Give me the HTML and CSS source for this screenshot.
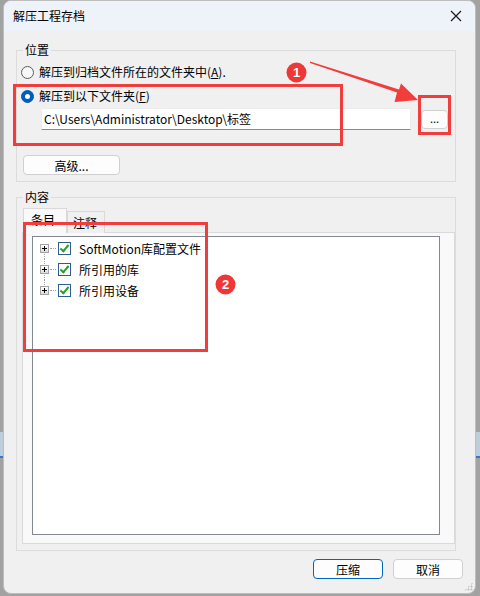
FILE: index.html
```html
<!DOCTYPE html>
<html>
<head>
<meta charset="utf-8">
<link rel="stylesheet" href="styles.css">
</head>
<body>
<div class="desk-strip"></div>
<div class="window">
  <div class="titlebar">
    <span class="title">解压工程存档</span>
    <svg class="close" width="12" height="12" viewBox="0 0 12 12"><path d="M1 1L11 11M11 1L1 11" stroke="#1a1a1a" stroke-width="1.2"/></svg>
  </div>
  <div class="content">
    <div class="group g1">
      <div class="legend">位置</div>
      <div class="radio-row"><span class="radio"></span><span>解压到归档文件所在的文件夹中(<u>A</u>).</span></div>
      <div class="radio-row second"><span class="radio checked"></span><span>解压到以下文件夹(<u>F</u>)</span></div>
      <div class="path-row">
        <div class="input">C:\Users\Administrator\Desktop\标签</div>
        <div class="btn browse">...</div>
      </div>
      <div class="btn adv">高级...</div>
    </div>
    <div class="group g2">
      <div class="legend">内容</div>
      <div class="tabs">
        <div class="tab active">条目</div>
        <div class="tab">注释</div>
      </div>
      <div class="tabpage">
        <div class="tree">
          <div class="tree-row first"><span class="expander"></span><span class="dots"></span><span class="check"></span><span class="label">SoftMotion库配置文件</span></div>
          <div class="tree-row"><span class="expander"></span><span class="dots"></span><span class="check"></span><span class="label">所引用的库</span></div>
          <div class="tree-row last"><span class="expander"></span><span class="dots"></span><span class="check"></span><span class="label">所引用设备</span></div>
        </div>
      </div>
    </div>
    <div class="footer">
      <div class="btn action default">压缩</div>
      <div class="btn action">取消</div>
    </div>
  </div>
  <div class="grip"></div>
</div>
<svg class="annot" width="480" height="596" viewBox="0 0 480 596">
  <rect x="14.5" y="85.5" width="327" height="59" fill="none" stroke="#f23d3d" stroke-width="3"/>
  <rect x="419.5" y="96.5" width="30" height="37" fill="none" stroke="#f23d3d" stroke-width="3"/>
  <rect x="24.5" y="223.5" width="182" height="127" fill="none" stroke="#f23d3d" stroke-width="3"/>
  <polygon points="310,61.5 310,63 397,92.5 394.5,102 418,100 401,83.5 399,89.5" fill="#f23d3d"/>
  <circle cx="296.5" cy="72.5" r="10" fill="#ee3838"/>
  <text x="296.5" y="77" class="num">1</text>
  <circle cx="225.5" cy="284.5" r="10" fill="#ee3838"/>
  <text x="225.5" y="289" class="num">2</text>
</svg>
</body>
</html>
```
FILE: styles.css
```css
html, body {
  margin: 0;
  padding: 0;
}
body {
  width: 480px;
  height: 596px;
  background: #a2a2a2;
  position: relative;
  overflow: hidden;
  font-family: "Noto Sans CJK SC", "Noto Sans", sans-serif;
  font-size: 12px;
  color: #000;
}
.desk-strip {
  position: absolute;
  left: 0;
  top: 432px;
  width: 480px;
  height: 24px;
  background: #bdcddc;
  border-bottom: 2px solid #2f78d0;
}
.window {
  position: relative;
  z-index: 1;
  margin-left: 3px;
  width: 473px;
  height: 594px;
  box-sizing: border-box;
  border: 1px solid #bdbdbd;
  border-radius: 8px;
  background: #f0f0f0;
  overflow: hidden;
  display: flex;
  flex-direction: column;
}
.titlebar {
  height: 30px;
  flex: none;
  background: #eef3f9;
  display: flex;
  align-items: center;
  justify-content: space-between;
  padding: 0 9px 0 9px;
}
.title {
  font-size: 12px;
  line-height: 16px;
}
.close {
  margin-right: 4px;
}
.content {
  display: flex;
  flex-direction: column;
  padding: 0 12px 0 12px;
}
.group {
  width: 440px;
  border: 1px solid #dcdcdc;
  display: flex;
  flex-direction: column;
  align-items: flex-start;
  box-sizing: border-box;
}
.g1 {
  margin-top: 19px;
  height: 132px;
}
.g2 {
  margin-top: 15px;
  height: 354px;
  align-items: stretch;
}
.legend {
  margin-top: -9px;
  margin-left: 6px;
  padding: 0 2px;
  height: 16px;
  line-height: 16px;
  background: #f0f0f0;
  align-self: flex-start;
  font-size: 12px;
}
.radio-row {
  margin-top: 4px;
  height: 20px;
  display: flex;
  align-items: center;
  margin-left: 4px;
  line-height: 16px;
}
.radio-row u {
  text-decoration: underline;
  text-underline-offset: 1px;
}
.radio {
  width: 11px;
  height: 11px;
  border: 1px solid #5c5c5c;
  border-radius: 50%;
  background: #f7f7f7;
  margin-right: 5px;
  flex: none;
  position: relative;
}
.radio.checked {
  background: #005fb8;
  border-color: #005fb8;
}
.radio.checked::after {
  content: "";
  position: absolute;
  left: 3px;
  top: 3px;
  width: 5px;
  height: 5px;
  border-radius: 50%;
  background: #fff;
}
.path-row {
  margin-top: 2px;
  margin-left: 24px;
  display: flex;
  align-items: center;
  height: 22px;
}
.input {
  width: 370px;
  height: 22px;
  box-sizing: border-box;
  background: #fff;
  border: 1px solid #ececec;
  border-bottom: 1px solid #8a8a8a;
  border-radius: 2px 2px 0 0;
  padding-left: 2px;
  line-height: 20px;
  font-size: 12px;
  white-space: nowrap;
}
.btn {
  box-sizing: border-box;
  background: #fdfdfd;
  border: 1px solid #d0d0d0;
  border-radius: 4px;
  display: flex;
  align-items: center;
  justify-content: center;
  font-size: 12px;
}
.browse {
  margin-left: 10px;
  width: 27px;
  height: 19px;
  font-size: 11px;
  line-height: 10px;
  padding-bottom: 3px;
}
.adv {
  margin-top: 25px;
  margin-left: 6px;
  width: 97px;
  height: 20px;
}
.tabs {
  margin-top: 4px;
  margin-left: 6px;
  display: flex;
  align-items: flex-end;
  height: 24px;
  position: relative;
  z-index: 2;
  margin-bottom: -1px;
}
.tab {
  height: 22px;
  box-sizing: border-box;
  border: 1px solid #d9d9d9;
  border-bottom: none;
  background: #f0f0f0;
  padding: 0 5px 0 5px;
  line-height: 21px;
  width: 38px;
}
.tab.active {
  height: 25px;
  width: 44px;
  background: #f9f9f9;
  padding-left: 7px;
  line-height: 22px;
  margin-right: 0;
}
.tabpage {
  margin-left: 5px;
  margin-right: 0;
  height: 312px;
  box-sizing: border-box;
  border: 1px solid #d9d9d9;
  background: #f9f9f9;
  padding: 3px 14px 8px 9px;
  display: flex;
}
.tree {
  flex: 1;
  border: 1px solid #828790;
  background: #fff;
  padding-top: 1px;
}
.tree-row {
  height: 21px;
  display: flex;
  align-items: center;
  position: relative;
}
.tree-row::before {
  content: "";
  position: absolute;
  left: 11px;
  top: 0;
  bottom: 0;
  border-left: 1px dotted #a0a0a0;
}
.tree-row.first::before {
  top: 10px;
}
.tree-row.last::before {
  bottom: 10px;
}
.expander {
  position: relative;
  z-index: 1;
  margin-left: 7px;
  width: 9px;
  height: 9px;
  box-sizing: border-box;
  border: 1px solid #a3a3a3;
  background: linear-gradient(#ffffff, #dcdcdc);
  flex: none;
}
.expander::before {
  content: "";
  position: absolute;
  left: 1px;
  top: 3px;
  width: 5px;
  height: 1px;
  background: #000;
}
.expander::after {
  content: "";
  position: absolute;
  left: 3px;
  top: 1px;
  width: 1px;
  height: 5px;
  background: #000;
}
.dots {
  width: 6px;
  border-top: 1px dotted #a0a0a0;
  margin: 0 2px 0 1px;
}
.check {
  width: 13px;
  height: 13px;
  box-sizing: border-box;
  border: 1px solid #2f5d8e;
  background: #fff;
  position: relative;
  flex: none;
}
.check::after {
  content: "";
  position: absolute;
  left: 3px;
  top: 0px;
  width: 3px;
  height: 7px;
  border-right: 2px solid #27a02b;
  border-bottom: 2px solid #27a02b;
  transform: rotate(40deg);
}
.label {
  margin-left: 8px;
  line-height: 16px;
  font-size: 12px;
}
.footer {
  margin-top: 8px;
  display: flex;
  justify-content: flex-end;
  gap: 10px;
  padding-right: 0;
}
.action {
  width: 70px;
  height: 20px;
}
.action.default {
  border-color: #0067c0;
}
.grip {
  position: absolute;
  right: 2px;
  bottom: 2px;
  width: 9px;
  height: 9px;
  background:
    radial-gradient(circle, #bcbcbc 0.8px, transparent 1.2px) 0 0 / 3px 3px;
  clip-path: polygon(100% 0, 100% 100%, 0 100%);
}
.annot {
  position: absolute;
  left: 0;
  top: 0;
  z-index: 5;
  pointer-events: none;
}
.num {
  fill: #fff;
  font-family: "Liberation Sans", sans-serif;
  font-size: 13px;
  font-weight: bold;
  text-anchor: middle;
}
```
